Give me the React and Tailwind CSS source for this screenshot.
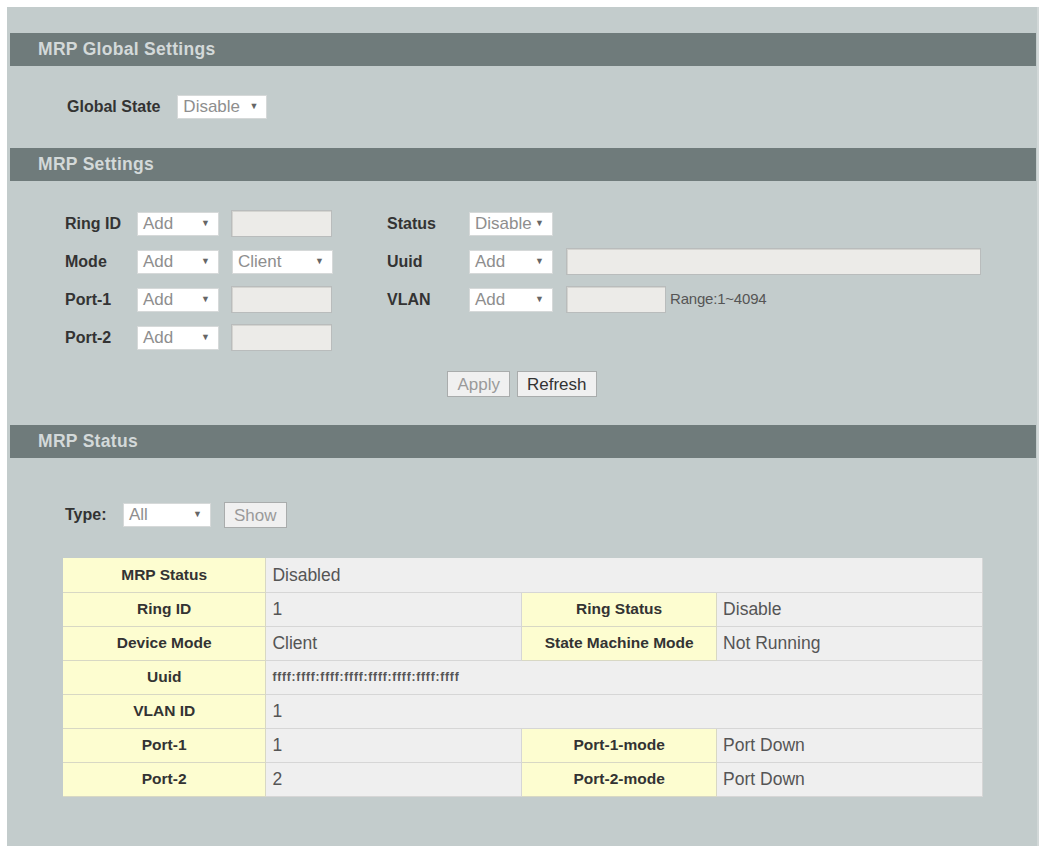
import React from "react";

const font = { fontFamily: '"Liberation Sans", Arial, sans-serif' };

const Header = ({ title }) => (
  <div className="h-[33px] bg-[#6f7b7b] flex items-center pl-[28px]">
    <span className="text-[17.5px] font-bold text-[#d3d9d9] tracking-[0.3px]">{title}</span>
  </div>
);

const Select = ({ value, w = "w-[82px]", dim = true }) => (
  <div className={`${w} h-[24px] bg-white border border-[#d6d9d9] flex items-center justify-between pl-[5px] pr-[8px]`}>
    <span className={`text-[17px] ${dim ? "text-[#8e8e8e]" : "text-[#555]"}`}>{value}</span>
    <span className="text-[9px] text-[#666]">▼</span>
  </div>
);

const Field = ({ w = "w-[101px]" }) => (
  <div className={`${w} h-[27px] bg-[#ecebe8] border border-[#b9bcbc] shadow-[inset_1px_1px_0_#d4d4d0]`} />
);

const Button = ({ label, dim }) => (
  <button className={`h-[26px] px-[9px] bg-[#f0f0f0] border border-[#a9acac] text-[17px] leading-none ${dim ? "text-[#9a9a9a]" : "text-[#333]"}`}>
    {label}
  </button>
);

const Label = ({ children, w }) => (
  <span className={`${w} text-[16px] font-bold text-[#333]`}>{children}</span>
);

const Th = ({ children }) => (
  <td className="bg-[#fdfdd0] text-center text-[15.5px] font-bold text-[#333] border-b border-r border-[#d8d8c4]">{children}</td>
);

const Td = ({ children, span }) => (
  <td colSpan={span} className="bg-[#efefef] pl-[6px] text-[17.5px] text-[#555] border-b border-r border-[#d6d6d6]">{children}</td>
);

export default function App() {
  return (
    <div className="bg-white min-h-[846px] pt-[7px] pl-[7px]" style={font}>
      <div className="w-[1032px] h-[839px] bg-[#c3cccc] pt-[26px] pl-[3px] pr-[1px] border-r-[2px] border-[#d2d8d8]">
        <Header title="MRP Global Settings" />
        <div className="h-[82px] flex items-center pl-[57px] gap-[17px]">
          <Label>Global State</Label>
          <Select value="Disable" w="w-[90px]" />
        </div>

        <Header title="MRP Settings" />
        <div className="pt-[29px] pl-[55px] flex flex-col gap-[11px]">
          <div className="flex items-center h-[27px]">
            <div className="w-[322px] flex items-center">
              <Label w="w-[72px]">Ring ID</Label>
              <Select value="Add" />
              <div className="ml-[12px]"><Field /></div>
            </div>
            <Label w="w-[82px]">Status</Label>
            <Select value="Disable" w="w-[84px]" />
          </div>
          <div className="flex items-center h-[27px]">
            <div className="w-[322px] flex items-center">
              <Label w="w-[72px]">Mode</Label>
              <Select value="Add" />
              <div className="ml-[13px]"><Select value="Client" w="w-[101px]" /></div>
            </div>
            <Label w="w-[82px]">Uuid</Label>
            <Select value="Add" w="w-[84px]" />
            <div className="ml-[13px]"><Field w="w-[415px]" /></div>
          </div>
          <div className="flex items-center h-[27px]">
            <div className="w-[322px] flex items-center">
              <Label w="w-[72px]">Port-1</Label>
              <Select value="Add" />
              <div className="ml-[12px]"><Field /></div>
            </div>
            <Label w="w-[82px]">VLAN</Label>
            <Select value="Add" w="w-[84px]" />
            <div className="ml-[13px]"><Field w="w-[100px]" /></div>
            <span className="ml-[4px] text-[15px] text-[#555] tracking-[-0.2px]">Range:1~4094</span>
          </div>
          <div className="flex items-center h-[27px]">
            <div className="w-[322px] flex items-center">
              <Label w="w-[72px]">Port-2</Label>
              <Select value="Add" />
              <div className="ml-[12px]"><Field /></div>
            </div>
          </div>
        </div>
        <div className="flex justify-center gap-[7px] pt-[20px] pb-[28px] pr-[2px]">
          <Button label="Apply" dim />
          <Button label="Refresh" />
        </div>

        <Header title="MRP Status" />
        <div className="pt-[44px] pl-[55px] flex items-center">
          <Label w="w-[58px]">Type:</Label>
          <Select value="All" w="w-[88px]" />
          <div className="ml-[13px]"><Button label="Show" dim /></div>
        </div>
        <div className="pt-[30px] pl-[53px]">
          <table className="border-collapse w-[920px] [&_tr]:h-[34px]">
            <colgroup>
              <col className="w-[203px]" />
              <col className="w-[256px]" />
              <col className="w-[195px]" />
              <col className="w-[266px]" />
            </colgroup>
            <tbody>
              <tr><Th>MRP Status</Th><Td span={3}>Disabled</Td></tr>
              <tr><Th>Ring ID</Th><Td>1</Td><Th>Ring Status</Th><Td>Disable</Td></tr>
              <tr><Th>Device Mode</Th><Td>Client</Td><Th>State Machine Mode</Th><Td>Not Running</Td></tr>
              <tr>
                <Th>Uuid</Th>
                <td colSpan={3} className="bg-[#efefef] pl-[6px] text-[12px] tracking-[0.8px] font-bold text-[#555] border-b border-r border-[#d6d6d6]">
                  ffff:ffff:ffff:ffff:ffff:ffff:ffff:ffff
                </td>
              </tr>
              <tr><Th>VLAN ID</Th><Td span={3}>1</Td></tr>
              <tr><Th>Port-1</Th><Td>1</Td><Th>Port-1-mode</Th><Td>Port Down</Td></tr>
              <tr><Th>Port-2</Th><Td>2</Td><Th>Port-2-mode</Th><Td>Port Down</Td></tr>
            </tbody>
          </table>
        </div>
      </div>
    </div>
  );
}
